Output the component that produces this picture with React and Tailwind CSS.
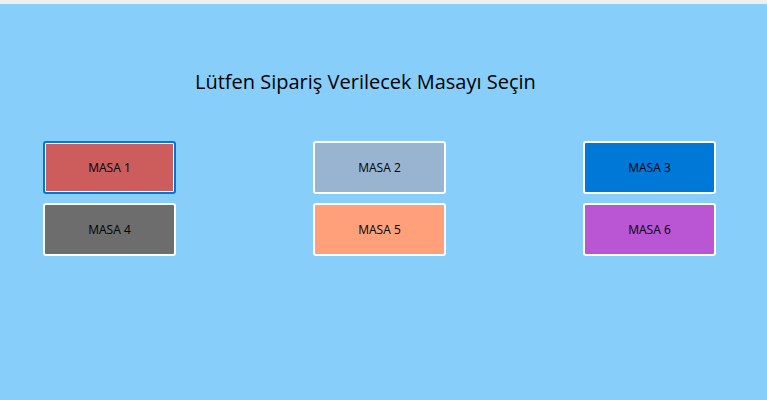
import React from 'react';

const tables = [
    { name: 'MASA 1', bg: 'bg-[#cd5c5c]', focused: true },
    { name: 'MASA 2', bg: 'bg-[#99b4d1]' },
    { name: 'MASA 3', bg: 'bg-[#0078d7]' },
    { name: 'MASA 4', bg: 'bg-[#6d6d6d]' },
    { name: 'MASA 5', bg: 'bg-[#ffa07a]' },
    { name: 'MASA 6', bg: 'bg-[#ba55d3]' },
];

function TableButton({ table }) {
    return (
        <button
            className={`w-[133px] h-[53px] rounded-[3px] border-2 text-[12px] text-black ${table.bg} ${
                table.focused ? 'border-[#0078d7] shadow-[inset_0_0_0_1px_white]' : 'border-white'
            }`}
        >
            {table.name}
        </button>
    );
}

export default function App() {
    return (
        <div className="w-[767px] h-[400px] flex flex-col bg-[#87cefa] font-['Open_Sans',sans-serif]">
            {/* Window top strip */}
            <div className="h-[4px] bg-[#f0f0f0]" />

            <h1 className="mt-[64px] ml-[195px] text-[20px] leading-[28px] text-black">
                Lütfen Sipariş Verilecek Masayı Seçin
            </h1>

            <div className="mt-[45px] ml-[43px] grid grid-cols-[133px_133px_133px] gap-x-[137px] gap-y-[9px]">
                {tables.map((t) => (
                    <TableButton key={t.name} table={t} />
                ))}
            </div>
        </div>
    );
}
